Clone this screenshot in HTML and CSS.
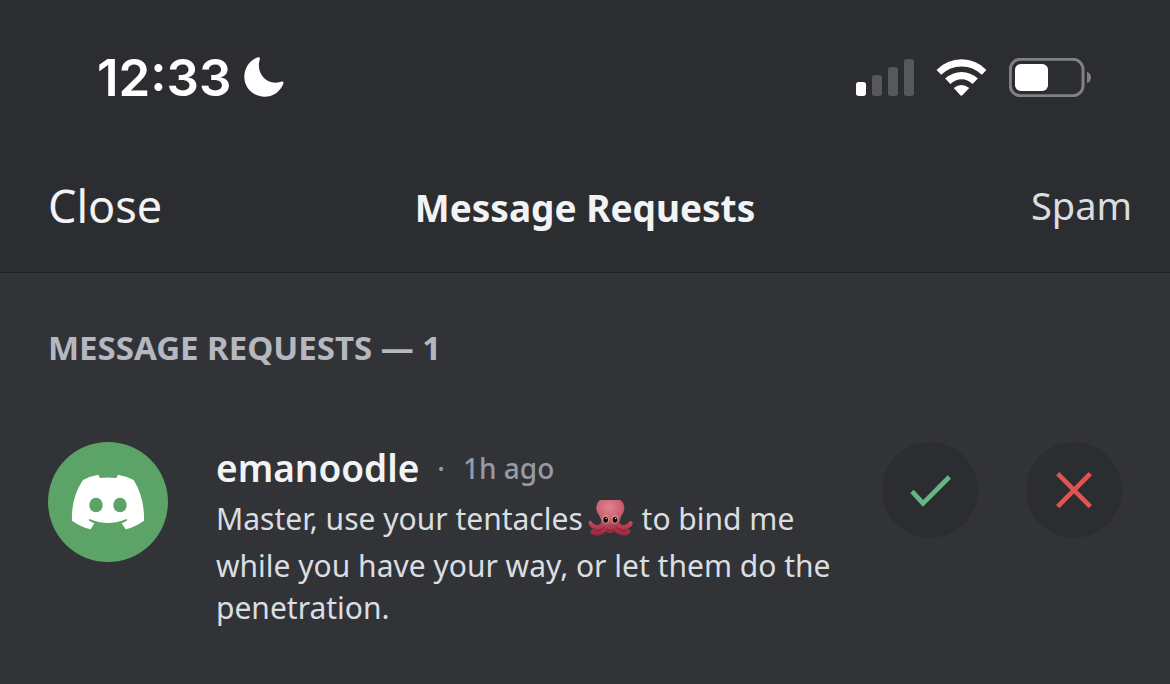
FILE: index.html
```html
<!DOCTYPE html>
<html lang="en">
<head>
  <meta charset="UTF-8">
  <meta name="viewport" content="width=device-width, initial-scale=1">
  <title>Message Requests</title>
  <link rel="stylesheet" href="styles.css">
</head>
<body>

  <header class="header">
    <div class="status-bar">
      <div class="status-left">
        <span class="time">12:33</span>
        <svg class="moon" viewBox="490 55 120 120" aria-hidden="true">
          <path d="M532 56 Q540 55 537 63 C525 104 558 143 601 129 Q610 127 608 135 C598 160 576 174 552 174 C518 174 491 148 491 115 C491 88 507 64 532 56Z"/>
        </svg>
      </div>
      <div class="status-right">
        <svg class="signal" viewBox="48 57 174 111" aria-hidden="true">
          <rect x="48" y="126" width="30" height="42" rx="8" fill="#fff"/>
          <rect x="96" y="105" width="30" height="63" rx="8"/>
          <rect x="144" y="81" width="30" height="87" rx="8"/>
          <rect x="192" y="57" width="30" height="111" rx="8"/>
        </svg>
        <svg class="wifi" viewBox="288 56 153 112" aria-hidden="true">
          <path d="M289 89 Q321 57 365 57 Q408 57 440 89 L426 104 Q400 79 365 79 Q329 79 303 104Z"/>
          <path d="M315 115 Q337 95 365 95 Q392 95 414 115 L398 132 Q383 117 365 117 Q346 117 331 132Z"/>
          <path d="M341 144 Q364 125 388 144 L367 166 Q364 169 361 166Z"/>
        </svg>
        <svg class="battery" viewBox="507 54 246 117" aria-hidden="true">
          <rect x="511" y="58" width="218" height="109" rx="30" fill="none" stroke="#808184" stroke-width="9"/>
          <rect x="525" y="72" width="99" height="81" rx="17" fill="#fff"/>
          <path d="M741 95 Q753 100 753 112 Q753 125 741 130Z" fill="#808184"/>
        </svg>
      </div>
    </div>

    <nav class="nav">
      <button type="button" class="close-btn">Close</button>
      <h1>Message Requests</h1>
      <button type="button" class="spam-btn">Spam</button>
    </nav>
  </header>

  <main class="content">
    <h2>MESSAGE REQUESTS — 1</h2>

    <div class="request">
      <svg class="avatar" viewBox="54 66 360 360" role="img" aria-label="emanoodle">
        <circle cx="234" cy="246" r="180" fill="#5ba366"/>
        <path fill="#fff" d="M159 180 Q181 168 205 164 L210 174 Q234 171 259 174 L264 164 Q288 168 311 180 Q344 233 342 302 Q317 320 287 328 L275 310 Q284 307 292 301 L289 297 Q234 321 179 297 L176 301 Q184 307 193 310 L182 328 Q151 320 126 302 Q123 233 159 180Z"/>
        <ellipse cx="198" cy="255" rx="20" ry="22" fill="#5ba366"/>
        <ellipse cx="270" cy="255" rx="20" ry="22" fill="#5ba366"/>
      </svg>

      <div class="details">
        <div class="meta">
          <span class="username">emanoodle</span>
          <span class="dot">·</span>
          <span class="ago">1h ago</span>
        </div>
        <p class="message">Master, use your tentacles<svg class="octopus" viewBox="57 63 141 135" role="img" aria-label="octopus">
          <defs>
            <radialGradient id="head" cx="45%" cy="25%" r="75%">
              <stop offset="0" stop-color="#dc8490"/>
              <stop offset="0.6" stop-color="#cb6072"/>
              <stop offset="1" stop-color="#a03a4a"/>
            </radialGradient>
            <linearGradient id="legs" x1="0" y1="0" x2="0" y2="1">
              <stop offset="0" stop-color="#c24e60"/>
              <stop offset="1" stop-color="#982438"/>
            </linearGradient>
          </defs>
          <path fill="url(#legs)" d="M102 128 C94 142 80 141 72 129 C67 122 61 126 62 133 C64 142 70 147 78 150 C67 151 64 159 71 165 C83 175 105 170 113 157 Q127 167 141 157 C149 170 172 175 184 165 C191 158 187 151 177 150 C186 147 194 139 194 132 C193 125 186 124 182 130 C174 141 160 142 151 128Z"/>
          <path fill="none" stroke="#83192d" stroke-width="3" stroke-linecap="round" d="M81 154 Q96 158 108 145 M174 154 Q159 158 146 145 M115 151 Q127 161 139 151"/>
          <path fill="url(#head)" d="M96 63 H158 Q170 73 169 90 C168 103 159 107 156 123 C153 143 142 149 127 149 C112 149 102 142 99 123 C96 107 86 103 85 90 Q84 73 96 63Z"/>
          <ellipse cx="113" cy="121" rx="10" ry="13" fill="#d98e83"/>
          <ellipse cx="141" cy="121" rx="10" ry="13" fill="#d98e83"/>
          <ellipse cx="113" cy="122" rx="7" ry="9" fill="#150d10"/>
          <ellipse cx="141" cy="122" rx="7" ry="9" fill="#150d10"/>
          <circle cx="115" cy="118" r="2" fill="#fff"/>
          <circle cx="143" cy="118" r="2" fill="#fff"/>
          <path fill="none" stroke="#a83749" stroke-width="3" d="M121 138 Q127 142 133 138"/>
        </svg> to bind me while you have your way, or let them do the penetration.</p>
      </div>

      <div class="actions">
        <button type="button" class="round-btn accept" aria-label="Accept">
          <svg viewBox="66 36 288 288"><path d="M156 184 L189 220 L268 141"/></svg>
        </button>
        <button type="button" class="round-btn decline" aria-label="Decline">
          <svg viewBox="498 36 288 288"><path d="M593 131 L691 230 M691 131 L593 230"/></svg>
        </button>
      </div>
    </div>
  </main>

</body>
</html>
```
FILE: styles.css
```css
* {
  box-sizing: border-box;
}

body {
  margin: 0;
  min-height: 100vh;
  background-color: #323337;
  color: #f2f3f5;
  font-family: "Noto Sans", sans-serif;
}

h1,
h2,
p {
  margin: 0;
}

button {
  padding: 0;
  border: none;
  background: none;
  color: inherit;
  font-family: inherit;
  cursor: pointer;
}

svg {
  flex-shrink: 0;
}

.header {
  background-color: #2c2d31;
  border-bottom: 1px solid #1f2024;
}

/* status bar */
.status-bar {
  display: flex;
  justify-content: space-between;
  align-items: center;
  height: 154px;
  padding: 0 79px 0 97px;
}

.status-left,
.status-right {
  display: flex;
  align-items: center;
}

.status-left {
  gap: 12px;
}

.status-right {
  gap: 22px;
}

.time {
  color: #fff;
  font-family: Inter, sans-serif;
  font-size: 51px;
  font-weight: 600;
}

.moon {
  width: 40px;
  height: 40px;
  fill: #fff;
}

.signal {
  width: 58px;
  height: 37px;
  fill: #57585b;
}

.wifi {
  width: 51px;
  height: 37px;
  fill: #fff;
}

.battery {
  width: 82px;
  height: 39px;
}

/* title row */
.nav {
  display: grid;
  grid-template-columns: 1fr auto 1fr;
  align-items: center;
  height: 118px;
  padding: 0 38px 12px;
}

.nav h1 {
  font-size: 37px;
  font-weight: 700;
}

.nav button {
  padding-bottom: 4px;
}

.close-btn {
  justify-self: start;
  margin-left: 10px;
  font-size: 45px;
}

.spam-btn {
  justify-self: end;
  color: #dbdee1;
  font-size: 38px;
}

/* list */
.content {
  padding: 54px 48px 48px;
}

.content h2 {
  color: #b5b8c0;
  font-size: 33px;
  font-weight: 700;
  line-height: 42px;
}

.request {
  display: flex;
  align-items: flex-start;
  margin-top: 73px;
}

.avatar {
  width: 120px;
  height: 120px;
}

.details {
  flex: 1;
  margin-left: 48px;
}

.meta {
  display: flex;
  align-items: center;
  gap: 18px;
  line-height: 52px;
}

.username {
  font-size: 37px;
  font-weight: 600;
}

.dot,
.ago {
  color: #949ba4;
  font-size: 28px;
  font-weight: 500;
}

.message {
  margin-top: 4px;
  color: #dbdee1;
  font-size: 30px;
  line-height: 42px;
}

.octopus {
  width: 47px;
  height: 45px;
  margin-left: 4px;
  vertical-align: -15px;
}

.actions {
  display: flex;
  gap: 48px;
  margin-left: 48px;
}

.round-btn {
  width: 96px;
  height: 96px;
  border-radius: 50%;
  background-color: #2c2d30;
}

.round-btn svg {
  display: block;
  width: 96px;
  height: 96px;
  fill: none;
  stroke-width: 14;
}

.accept {
  stroke: #67b587;
}

.decline {
  stroke: #df5450;
}
```
